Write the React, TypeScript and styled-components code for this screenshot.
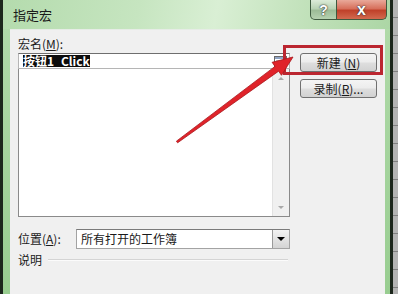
import styled, { createGlobalStyle } from 'styled-components'

const GlobalStyle = createGlobalStyle`
  html, body { margin: 0; padding: 0; }
  body {
    width: 398px;
    height: 294px;
    overflow: hidden;
    font-family: "Noto Sans CJK SC", "Liberation Sans", sans-serif;
    font-size: 12px;
    color: #1a1a1a;
  }
`

const Page = styled.div`
  position: relative;
  display: flex;
  width: 398px;
  height: 294px;
  overflow: hidden;
`

const Frame = styled.div`
  width: 393px;
  box-sizing: border-box;
  display: flex;
  flex-direction: column;
  border-left: 3px solid #1c271c;
  border-right: 3px solid #1c271c;
  background: linear-gradient(to bottom, #b2dbab, #98cd90);
`

const TitleBar = styled.div`
  height: 29px;
  flex-shrink: 0;
  display: flex;
  align-items: flex-start;
  background: linear-gradient(100deg, #b4dbad 0%, #c6e5c0 35%, #d9efd4 55%, #bfe0b8 80%, #acd6a5 100%);
`

const Title = styled.span`
  padding: 7px 0 0 10px;
  font-size: 13px;
  line-height: 16px;
  color: #1b1b1b;
`

const Caption = styled.div`
  margin-left: auto;
  margin-right: 3px;
  display: flex;
`

const CaptionButton = styled.div<{ $close?: boolean }>`
  width: ${p => (p.$close ? 50 : 27)}px;
  height: 20px;
  box-sizing: border-box;
  display: flex;
  align-items: center;
  justify-content: center;
  border: 1px solid #3f5a3f;
  border-top: 0;
  border-left-width: ${p => (p.$close ? 0 : 1)}px;
  border-radius: ${p => (p.$close ? '0 0 5px 0' : '0 0 0 5px')};
  background: ${p =>
    p.$close
      ? 'linear-gradient(to bottom, #e9a99a 0%, #d7705c 45%, #c0412a 55%, #d26a4f 100%)'
      : 'linear-gradient(to bottom, #dcebd8 0%, #b9d3b4 45%, #9dbc97 55%, #b6d2b0 100%)'};
  color: #fff;
  font-family: "Liberation Sans", sans-serif;
  font-weight: bold;
  font-size: ${p => (p.$close ? 16 : 14)}px;
  text-shadow: 0 0 2px #333, 0 0 1px #222;
`

const Body = styled.div`
  flex: 1;
  margin: 0 5px 0 7px;
  padding: 7px 0 0 8px;
  background: #f0f0f0;
  border-top: 1px solid #e6ece6;
`

const Label = styled.div`
  line-height: 14px;
  height: 14px;
  margin-bottom: 2px;
`

const MainRow = styled.div`
  display: flex;
  gap: 10px;
`

const LeftColumn = styled.div`
  width: 272px;
`

const NameInput = styled.div`
  height: 16px;
  box-sizing: border-box;
  display: flex;
  align-items: center;
  padding: 0 2px 0 4px;
  background: #fff;
  border: 1px solid #b5b5b5;
  border-top-color: #6e6e6e;
`

const Selected = styled.span`
  background: #0c0c0c;
  color: #fff;
  line-height: 12px;
  font-weight: bold;
`

const RefIcon = styled.svg`
  margin-left: auto;
  flex-shrink: 0;
`

const ListBox = styled.div`
  height: 148px;
  box-sizing: border-box;
  display: flex;
  background: #fff;
  border: 1px solid #8a8a8a;
  border-top: 0;
`

const ListArea = styled.div`
  flex: 1;
`

const ScrollTrack = styled.div`
  width: 16px;
  display: flex;
  flex-direction: column;
  justify-content: space-between;
  align-items: center;
  background: #f0f0f0;
  border-left: 1px solid #e2e2e2;
  padding: 8px 0 7px;
`

const ScrollArrow = styled.div<{ $down?: boolean }>`
  width: 0;
  height: 0;
  border-left: 3px solid transparent;
  border-right: 3px solid transparent;
  ${p => (p.$down ? 'border-top: 3px solid #a8a8a8;' : 'border-bottom: 3px solid #a8a8a8;')}
`

const RightColumn = styled.div`
  width: 77px;
  display: flex;
  flex-direction: column;
  gap: 7px;
`

const Button = styled.div`
  height: 19px;
  box-sizing: border-box;
  display: flex;
  align-items: center;
  justify-content: center;
  border: 1px solid #707070;
  border-radius: 3px;
  background: linear-gradient(to bottom, #f4f4f4 0%, #ececec 48%, #dedede 52%, #d2d2d2 100%);
  line-height: 14px;
`

const LocationRow = styled.div`
  margin-top: 12px;
  height: 20px;
  display: flex;
  align-items: center;
`

const LocLabel = styled.span`
  width: 58px;
  line-height: 14px;
`

const Select = styled.div`
  width: 214px;
  height: 20px;
  box-sizing: border-box;
  display: flex;
  align-items: center;
  background: #fff;
  border: 1px solid #a3a3a3;
  border-top-color: #7a7a7a;
`

const SelectText = styled.span`
  flex: 1;
  padding-left: 4px;
  line-height: 14px;
`

const SelectButton = styled.div`
  width: 17px;
  height: 18px;
  box-sizing: border-box;
  display: flex;
  align-items: center;
  justify-content: center;
  border-left: 1px solid #9a9a9a;
  background: linear-gradient(to bottom, #f2f2f2, #d4d4d4);
`

const DropArrow = styled.div`
  width: 0;
  height: 0;
  border-left: 4px solid transparent;
  border-right: 4px solid transparent;
  border-top: 4px solid #000;
`

const DescRow = styled.div`
  margin-top: 3px;
  width: 270px;
  height: 16px;
  display: flex;
  align-items: center;
`

const DescLabel = styled.span`
  line-height: 14px;
`

const Rule = styled.div`
  flex: 1;
  margin-left: 6px;
  border-top: 1px solid #d4d4d4;
  border-bottom: 1px solid #fbfbfb;
`

const SheetStrip = styled.div`
  flex: 1;
  background: repeating-linear-gradient(to bottom, #b4b4b4 0 17px, #808080 17px 18px);
`

const Highlight = styled.div`
  position: absolute;
  left: 283px;
  top: 45px;
  width: 100px;
  height: 30px;
  box-sizing: border-box;
  border: 3px solid #bb2630;
  pointer-events: none;
`

const ArrowLayer = styled.svg`
  position: absolute;
  left: 0;
  top: 0;
  pointer-events: none;
`

export default function App() {
  return (
    <>
      <GlobalStyle />
      <Page>
        <Frame>
          <TitleBar>
            <Title>指定宏</Title>
            <Caption>
              <CaptionButton>?</CaptionButton>
              <CaptionButton $close>x</CaptionButton>
            </Caption>
          </TitleBar>
          <Body>
            <Label>
              宏名(<u>M</u>):
            </Label>
            <MainRow>
              <LeftColumn>
                <NameInput>
                  <Selected>按钮1_Click</Selected>
                  <RefIcon width="13" height="11" viewBox="0 0 13 11">
                    <rect x="0.5" y="0.5" width="12" height="10" fill="#fff" stroke="#6a6a6a" />
                    <rect x="1" y="1" width="11" height="2" fill="#8fa4c4" />
                    <path d="M2 5h5M2 7h4M2 9h5" stroke="#8a8a8a" strokeWidth="1" />
                    <path d="M8 9l3-3M9 6h2v2" stroke="#c03030" strokeWidth="1" fill="none" />
                  </RefIcon>
                </NameInput>
                <ListBox>
                  <ListArea />
                  <ScrollTrack>
                    <ScrollArrow />
                    <ScrollArrow $down />
                  </ScrollTrack>
                </ListBox>
              </LeftColumn>
              <RightColumn>
                <Button>
                  新建 (<u>N</u>)
                </Button>
                <Button>
                  录制(<u>R</u>)...
                </Button>
              </RightColumn>
            </MainRow>
            <LocationRow>
              <LocLabel>
                位置(<u>A</u>):
              </LocLabel>
              <Select>
                <SelectText>所有打开的工作簿</SelectText>
                <SelectButton>
                  <DropArrow />
                </SelectButton>
              </Select>
            </LocationRow>
            <DescRow>
              <DescLabel>说明</DescLabel>
              <Rule />
            </DescRow>
          </Body>
        </Frame>
        <SheetStrip />
        <Highlight />
        <ArrowLayer width="398" height="294" viewBox="0 0 398 294">
          <polygon
            points="176.4,141.2 275,66.4 272.1,62.3 293,57 281.5,75.3 278.6,71.2 177.6,142.8"
            fill="#e0232a"
            stroke="#a8161c"
            strokeWidth="0.8"
            strokeLinejoin="round"
          />
        </ArrowLayer>
      </Page>
    </>
  )
}
